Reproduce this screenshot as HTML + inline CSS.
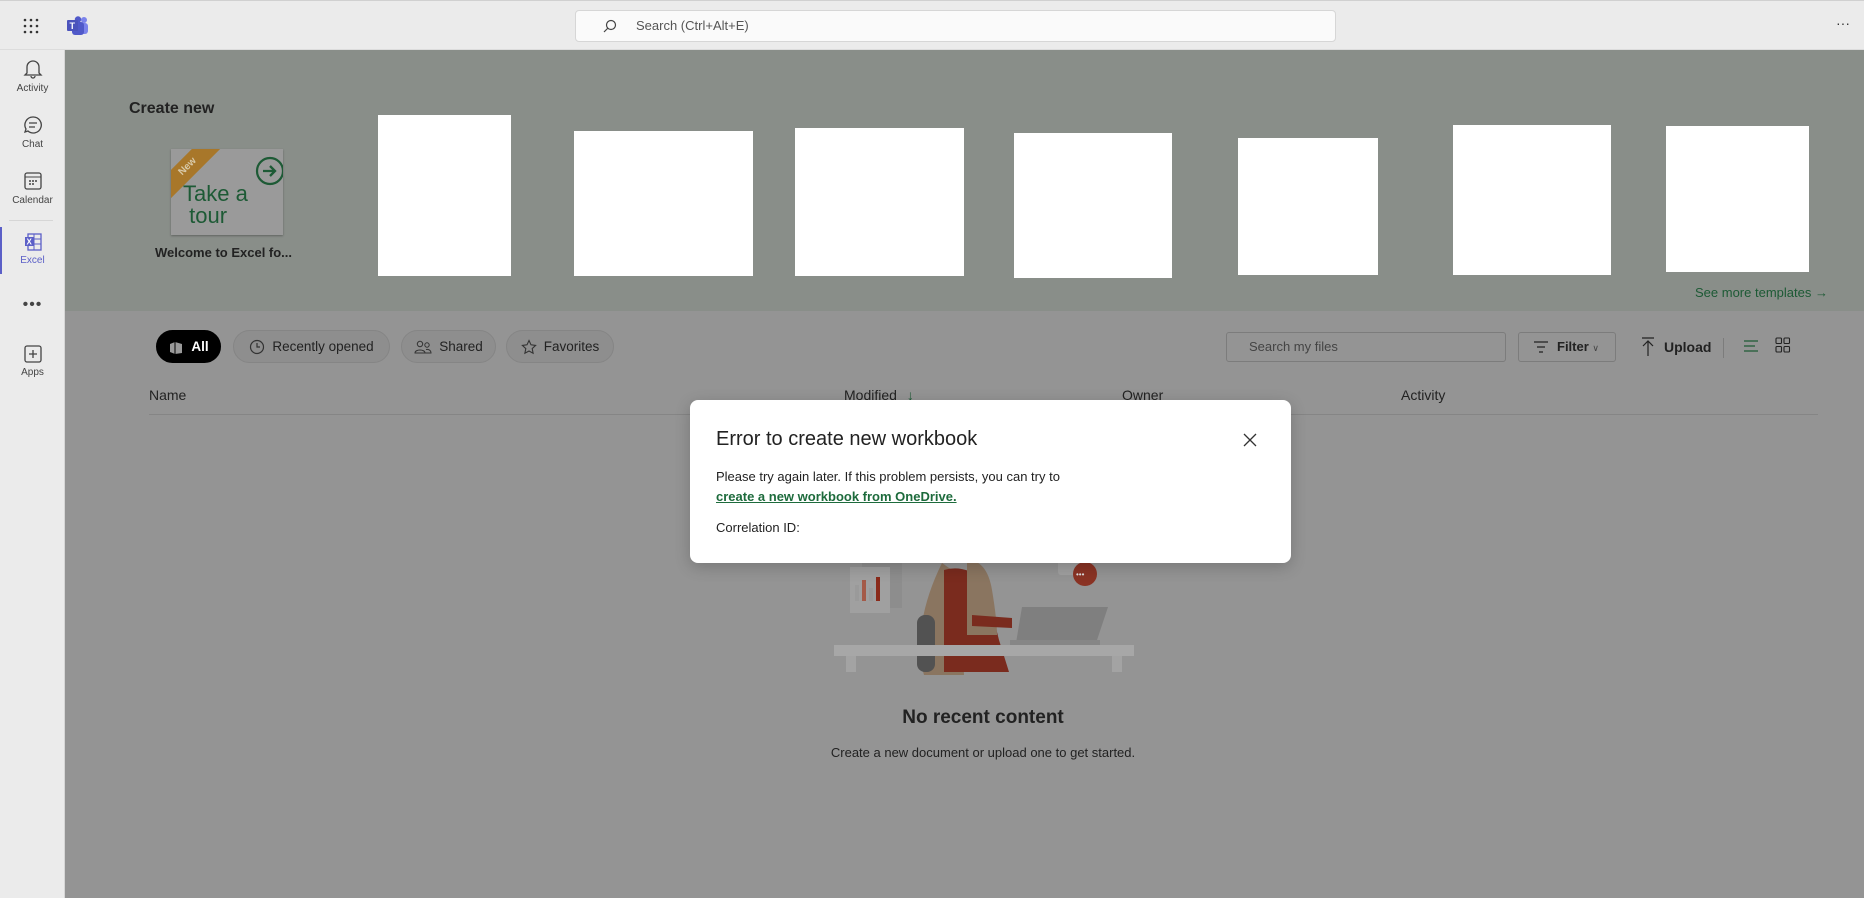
<!DOCTYPE html>
<html><head><meta charset="utf-8"><style>
*{box-sizing:border-box;margin:0;padding:0}
body{width:1864px;height:898px;overflow:hidden;font-family:"Liberation Sans",sans-serif;background:#949494;position:relative;color:#1a1a1a}
.abs{position:absolute}
.top{left:0;top:0;width:1864px;height:50px;background:#ebebeb;border-bottom:1px solid #dcdcdc;border-top:1px solid #d0d0d0}
.side{left:0;top:50px;width:65px;height:848px;background:#ebebeb;border-right:1px solid #d6d6d6}
.nav{position:absolute;left:0;width:65px;text-align:center;font-size:10px;color:#444}
.hero{left:65px;top:50px;width:1799px;height:261px;background:#898e89}
.wr{position:absolute;background:#fff}
.pill{position:absolute;top:330px;height:33px;border:1px solid #858585;border-radius:17px;background:#8e8e8e;font-size:13.5px;color:#222;display:flex;align-items:center;justify-content:center;gap:7px}
.hdr{position:absolute;top:387px;font-size:14px;color:#222}
</style></head><body>
<div class="abs top"></div>
<svg class="abs" style="left:23px;top:18px" width="16" height="16"><g fill="#333"><circle cx="2" cy="2" r="1.3"/><circle cx="8" cy="2" r="1.3"/><circle cx="14" cy="2" r="1.3"/><circle cx="2" cy="8" r="1.3"/><circle cx="8" cy="8" r="1.3"/><circle cx="14" cy="8" r="1.3"/><circle cx="2" cy="14" r="1.3"/><circle cx="8" cy="14" r="1.3"/><circle cx="14" cy="14" r="1.3"/></g></svg>
<svg class="abs" style="left:66px;top:16px" width="23" height="20"><circle cx="18" cy="4" r="3" fill="#7b83eb"/><rect x="12" y="7" width="10" height="11" rx="3" fill="#7b83eb"/><circle cx="12" cy="3.5" r="3.2" fill="#5059c9"/><rect x="6" y="6" width="12" height="13" rx="3" fill="#5059c9"/><rect x="1" y="4" width="11" height="11" rx="1" fill="#4b53bc"/><text x="3.5" y="13" font-size="9" font-weight="bold" fill="#fff" font-family="Liberation Sans">T</text></svg>
<div class="abs" style="left:575px;top:10px;width:761px;height:32px;background:#fafafa;border:1px solid #d6d6d6;border-radius:4px;font-size:13px;color:#555;padding:7px 0 0 60px">Search (Ctrl+Alt+E)</div>
<svg class="abs" style="left:603px;top:19px" width="14" height="14"><circle cx="8" cy="6" r="4.5" stroke="#444" fill="none" stroke-width="1.2"/><path d="M5 9L1 13" stroke="#444" stroke-width="1.2"/></svg>
<div class="abs" style="left:1836px;top:15px;font-size:14px;color:#333">···</div>

<div class="abs side"></div>
<div class="nav" style="top:58px"><svg width="22" height="22" viewBox="0 0 22 22"><path d="M5 15V9a6 6 0 0112 0v6l2 2H3z M9 18a2 2 0 004 0" fill="none" stroke="#444" stroke-width="1.3"/></svg><div>Activity</div></div>
<div class="nav" style="top:114px"><svg width="22" height="22"><path d="M11 3a8 8 0 11-5 14l-3 1 1-3A8 8 0 0111 3z M7 9h8M7 13h6" fill="none" stroke="#444" stroke-width="1.3"/></svg><div>Chat</div></div>
<div class="nav" style="top:170px"><svg width="22" height="22"><rect x="3" y="3" width="16" height="16" rx="2" fill="none" stroke="#444" stroke-width="1.3"/><path d="M3 7h16" stroke="#444"/><g fill="#444"><circle cx="8" cy="11" r="1"/><circle cx="11" cy="11" r="1"/><circle cx="14" cy="11" r="1"/><circle cx="8" cy="14" r="1"/><circle cx="11" cy="14" r="1"/></g></svg><div>Calendar</div></div>
<div class="abs" style="left:9px;top:220px;width:44px;height:1px;background:#d6d6d6"></div>
<div class="abs" style="left:0;top:227px;width:2px;height:47px;background:#5b5fc7"></div>
<div class="nav" style="top:232px;color:#5b5fc7"><svg width="20" height="20"><rect x="5" y="2" width="13" height="16" fill="none" stroke="#5b5fc7" stroke-width="1.3"/><path d="M5 7h13M5 12h13M11 2v16" stroke="#5b5fc7"/><rect x="2" y="5" width="9" height="9" fill="#5b5fc7"/><text x="3.5" y="12.5" font-size="8" font-weight="bold" fill="#fff" font-family="Liberation Sans">X</text></svg><div>Excel</div></div>
<div class="nav" style="top:296px;font-size:16px;color:#444;letter-spacing:1px">•••</div>
<div class="nav" style="top:344px"><svg width="20" height="20"><rect x="2" y="2" width="16" height="16" rx="2" fill="none" stroke="#444" stroke-width="1.3"/><path d="M10 6v8M6 10h8" stroke="#444" stroke-width="1.3"/></svg><div>Apps</div></div>

<div class="abs hero"></div>
<div class="abs" style="left:129px;top:100px;font-size:16px;font-weight:bold;color:#222">Create new</div>
<div class="abs" style="left:171px;top:149px;width:112px;height:86px;background:#9a9a9a;box-shadow:0 1px 2px rgba(0,0,0,.3);overflow:hidden">
<div style="position:absolute;left:-28px;top:8px;width:90px;height:20px;background:#a8772a;transform:rotate(-45deg);font-size:10px;color:#d8c9a8;text-align:center;font-weight:bold;line-height:20px">New</div>
<div style="position:absolute;left:12px;top:34px;font-size:22px;color:#1d5a35;line-height:22px">Take a<br>&nbsp;tour</div>
<svg style="position:absolute;left:84px;top:7px" width="30" height="30"><circle cx="15" cy="15" r="13" fill="none" stroke="#1d5a35" stroke-width="2.2"/><path d="M8 15h12M15 10l5 5-5 5" fill="none" stroke="#1d5a35" stroke-width="2.3"/></svg>
</div>
<div class="abs" style="left:155px;top:245px;font-size:13px;font-weight:bold;color:#222">Welcome to Excel fo...</div>
<div class="wr" style="left:378px;top:115px;width:133px;height:161px"></div>
<div class="wr" style="left:574px;top:131px;width:179px;height:145px"></div>
<div class="wr" style="left:795px;top:128px;width:169px;height:148px"></div>
<div class="wr" style="left:1014px;top:133px;width:158px;height:145px"></div>
<div class="wr" style="left:1238px;top:138px;width:140px;height:137px"></div>
<div class="wr" style="left:1453px;top:125px;width:158px;height:150px"></div>
<div class="wr" style="left:1666px;top:126px;width:143px;height:146px"></div>
<div class="abs" style="left:1695px;top:285px;font-size:13px;color:#1d5a35">See more templates →</div>

<div class="pill" style="left:156px;width:65px;background:#000;border-color:#000;color:#fff;font-weight:bold"><svg width="16" height="16"><path d="M2 5l5-2 7 2v9l-7 1-5-2z" fill="#9a9a9a"/><path d="M7 3v12" stroke="#000"/></svg>All</div>
<div class="pill" style="left:233px;width:157px"><svg width="16" height="16"><circle cx="8" cy="8" r="6.5" fill="none" stroke="#333" stroke-width="1.2"/><path d="M8 4v4h3" fill="none" stroke="#333" stroke-width="1.2"/></svg>Recently opened</div>
<div class="pill" style="left:401px;width:95px"><svg width="18" height="14"><circle cx="6" cy="4" r="2.7" fill="none" stroke="#333"/><circle cx="13" cy="5" r="2.2" fill="none" stroke="#333"/><path d="M1 13c0-4 10-4 10 0zM11 13h6c0-3-3-4-5-3.5" fill="none" stroke="#333"/></svg>Shared</div>
<div class="pill" style="left:506px;width:108px"><svg width="16" height="16"><path d="M8 1.5l2 4.3 4.6.6-3.4 3.2.9 4.6L8 12l-4.1 2.2.9-4.6L1.4 6.4 6 5.8z" fill="none" stroke="#333" stroke-width="1.1"/></svg>Favorites</div>

<div class="abs" style="left:1226px;top:332px;width:280px;height:30px;border:1px solid #7c7c7c;border-radius:3px;font-size:13px;color:#444;padding:6px 0 0 22px">Search my files</div>
<div class="abs" style="left:1518px;top:332px;width:98px;height:30px;border:1px solid #7c7c7c;border-radius:3px;font-size:13px;font-weight:bold;color:#222;padding:6px 0 0 38px">Filter <span style="font-weight:normal;font-size:9px;color:#444">∨</span></div>
<svg class="abs" style="left:1533px;top:340px" width="16" height="14"><path d="M1 2h14M4 7h8M6 12h4" stroke="#222" stroke-width="1.2"/></svg>
<svg class="abs" style="left:1641px;top:337px" width="14" height="20"><path d="M1 1h12M7 4v15M2 9l5-5 5 5" fill="none" stroke="#222" stroke-width="1.2"/></svg>
<div class="abs" style="left:1664px;top:339px;font-size:14px;font-weight:bold;color:#222">Upload</div>
<div class="abs" style="left:1723px;top:338px;width:1px;height:20px;background:#7c7c7c"></div>
<svg class="abs" style="left:1743px;top:339px" width="16" height="14"><path d="M1 2h14M1 7h11M1 12h14" stroke="#1d5a35" stroke-width="1.3"/></svg>
<svg class="abs" style="left:1775px;top:337px" width="16" height="17"><g fill="none" stroke="#222" stroke-width="1.1"><rect x="1" y="1" width="5.5" height="5.5" rx="1"/><rect x="9" y="1" width="5.5" height="5.5" rx="1"/><rect x="1" y="9.5" width="5.5" height="5.5" rx="1"/><rect x="9" y="9.5" width="5.5" height="5.5" rx="1"/></g></svg>

<div class="hdr" style="left:149px">Name</div>
<div class="hdr" style="left:844px">Modified <span style="color:#1d5a35;margin-left:6px">↓</span></div>
<div class="hdr" style="left:1122px">Owner</div>
<div class="hdr" style="left:1401px">Activity</div>
<div class="abs" style="left:149px;top:414px;width:1669px;height:1px;background:#858585"></div>

<svg class="abs" style="left:832px;top:555px" width="305" height="120">
<rect x="30" y="5" width="40" height="48" fill="#8d8d8d"/><rect x="18" y="12" width="40" height="46" fill="#a0a0a0"/>
<rect x="23" y="30" width="4" height="16" fill="#9a9a9a"/><rect x="30" y="25" width="4" height="21" fill="#a45a48"/><rect x="37" y="33" width="4" height="13" fill="#9a9a9a"/><rect x="44" y="22" width="4" height="24" fill="#8a2a1a"/>
<path d="M110 8q-15 30-20 60t2 52h40l-5-100z" fill="#8a7560"/>
<rect x="85" y="60" width="18" height="57" rx="8" fill="#525252"/>
<path d="M112 15q20-6 40 10l15 60 10 32h-65z" fill="#7a2b1e"/>
<path d="M135 5q20 0 25 30t5 45h-30z" fill="#8a7560"/>
<path d="M140 60l40 3v10l-40-2z" fill="#7a2b1e"/>
<path d="M190 52h86l-12 36h-80z" fill="#7f7f7f"/>
<path d="M178 85h90v5h-90z" fill="#868686"/>
<rect x="2" y="90" width="300" height="11" fill="#a7a7a7"/>
<rect x="14" y="101" width="10" height="16" fill="#a3a3a3"/><rect x="280" y="101" width="10" height="16" fill="#a3a3a3"/>
<rect x="226" y="5" width="30" height="15" rx="3" fill="#a0a0a0"/>
<circle cx="253" cy="19" r="12" fill="#8a3324"/><text x="244" y="22" font-size="8" fill="#ddd" font-family="Liberation Sans">•••</text>
</svg>
<div class="abs" style="left:0;width:1966px;top:707px;text-align:center;font-size:19px;font-weight:bold;color:#222">No recent content</div>
<div class="abs" style="left:0;width:1966px;top:745px;text-align:center;font-size:13px;color:#222">Create a new document or upload one to get started.</div>

<div class="abs" style="left:690px;top:400px;width:601px;height:163px;background:#fff;border-radius:8px;box-shadow:0 4px 16px rgba(0,0,0,.2)">
<div style="position:absolute;left:26px;top:28px;font-size:20px;color:#222">Error to create new workbook</div>
<svg style="position:absolute;left:553px;top:33px" width="14" height="14"><path d="M1 1l12 12M13 1L1 13" stroke="#333" stroke-width="1.3"/></svg>
<div style="position:absolute;left:26px;top:67px;font-size:13px;color:#222;line-height:20px">Please try again later. If this problem persists, you can try to<br><span style="color:#1d6b3c;font-weight:bold;text-decoration:underline">create a new workbook from OneDrive.</span></div>
<div style="position:absolute;left:26px;top:120px;font-size:13px;color:#222">Correlation ID: </div>
</div>
</body></html>
